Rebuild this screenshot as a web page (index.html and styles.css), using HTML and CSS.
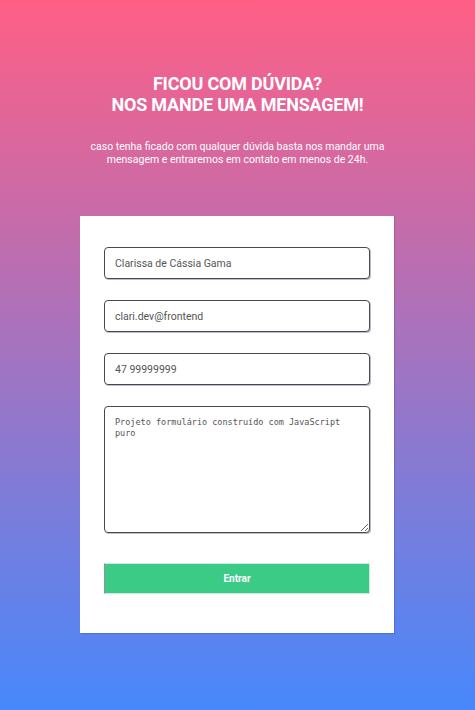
FILE: index.html
```html
<!DOCTYPE html>
<html lang="pt-BR">
<head>
<meta charset="utf-8">
<title>Formulário</title>
<link rel="stylesheet" href="styles.css">
</head>
<body>
<main class="page">
  <header class="intro">
    <h1 class="title">FICOU COM DÚVIDA?<br>NOS MANDE UMA MENSAGEM!</h1>
    <p class="lead">caso tenha ficado com qualquer dúvida basta nos mandar uma<br>mensagem e entraremos em contato em menos de 24h.</p>
  </header>
  <form class="card">
    <input class="field" type="text" value="Clarissa de Cássia Gama">
    <input class="field" type="text" value="clari.dev@frontend">
    <input class="field" type="text" value="47 99999999">
    <textarea class="field area">Projeto formulário construído com JavaScript puro</textarea>
    <button class="submit" type="button">Entrar</button>
  </form>
</main>
</body>
</html>
```
FILE: styles.css
```css
* { box-sizing: border-box; }
html, body { margin: 0; padding: 0; }
body {
  min-height: 710px;
  background: linear-gradient(180deg, #ff5f85 0%, #4788fc 100%);
  font-family: Roboto, "Liberation Sans", Arial, sans-serif;
}
.page {
  min-height: 710px;
  display: flex;
  flex-direction: column;
  align-items: center;
  padding-top: 73px;
}
.intro {
  text-align: center;
  color: #fff;
}
.title {
  margin: 0;
  font-size: 18px;
  line-height: 21px;
  font-weight: 700;
  letter-spacing: -0.2px;
}
.lead {
  margin: 25px 0 0;
  font-size: 10.5px;
  line-height: 13px;
}
.card {
  margin: 50px 1px 0 0;
  width: 314px;
  background: #fff;
  padding: 31px 24px 39px;
  display: flex;
  flex-direction: column;
  box-shadow: 1px 1px 1px rgba(0,0,0,0.12);
}
.field {
  width: 266px;
  height: 32px;
  margin: 0 0 21px;
  border: 1px solid #4a4a4a;
  border-radius: 4px;
  box-shadow: 1px 1px 0 rgba(120, 100, 150, 0.45);
  padding: 0 10px;
  font-family: Roboto, "Liberation Sans", Arial, sans-serif;
  font-size: 10.5px;
  color: #555;
  background: #fff;
  outline: none;
}
.area {
  height: 127px;
  margin-bottom: 30px;
  padding: 10px 10px;
  font-family: "DejaVu Sans Mono", "Liberation Mono", monospace;
  font-size: 8.5px;
  line-height: 11px;
  resize: vertical;
}
.submit {
  width: 266px;
  height: 31px;
  background: #3ccb87;
  border: 1px solid #c9eedd;
  border-left-color: #8a9a92;
  color: #fff;
  font-family: Roboto, "Liberation Sans", Arial, sans-serif;
  font-weight: 700;
  font-size: 10px;
  padding: 0;
}
```
